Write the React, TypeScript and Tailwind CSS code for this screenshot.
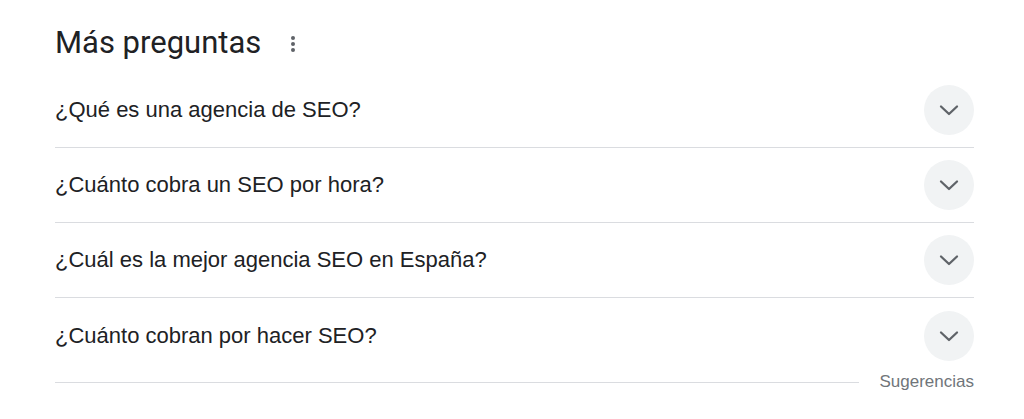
import React from "react";

const questions = [
  "¿Qué es una agencia de SEO?",
  "¿Cuánto cobra un SEO por hora?",
  "¿Cuál es la mejor agencia SEO en España?",
  "¿Cuánto cobran por hacer SEO?",
];

function Chevron() {
  return (
    <svg width="24" height="24" viewBox="0 0 24 24" fill="none">
      <path d="M4 8.5 12 16l8-7.5" stroke="#5f6368" strokeWidth="2.3" strokeLinecap="round" strokeLinejoin="round" />
    </svg>
  );
}

export default function App() {
  return (
    <div
      className="w-[1024px] h-[419px] bg-white pl-[55px] pr-[50px] text-[#202124]"
      style={{ fontFamily: '"Liberation Sans", Arial, sans-serif' }}
    >
      <div className="h-[73px] flex items-center gap-[30px] pt-[12px]">
        <span className="text-[31px] leading-none" style={{ fontFamily: 'Roboto, "Liberation Sans", sans-serif' }}>
          Más preguntas
        </span>
        <div className="flex flex-col gap-[2px] items-center pt-[2px]">
          <span className="w-[4px] h-[4px] rounded-full bg-[#5f6368]" />
          <span className="w-[4px] h-[4px] rounded-full bg-[#5f6368]" />
          <span className="w-[4px] h-[4px] rounded-full bg-[#5f6368]" />
        </div>
      </div>
      {questions.map((q, i) => (
        <div
          key={q}
          className={`h-[75px] flex items-center justify-between ${i < 3 ? "border-b border-[#dadce0]" : ""}`}
        >
          <span className="text-[22px] pb-[1px]">{q}</span>
          <div className="w-[50px] h-[50px] rounded-full bg-[#f1f3f4] flex items-center justify-center">
            <Chevron />
          </div>
        </div>
      ))}
      <div className="flex items-center gap-[20px]">
        <div className="flex-1 h-px bg-[#dadce0]" />
        <span className="text-[17px] leading-[18px] text-[#70757a]">Sugerencias</span>
      </div>
    </div>
  );
}
